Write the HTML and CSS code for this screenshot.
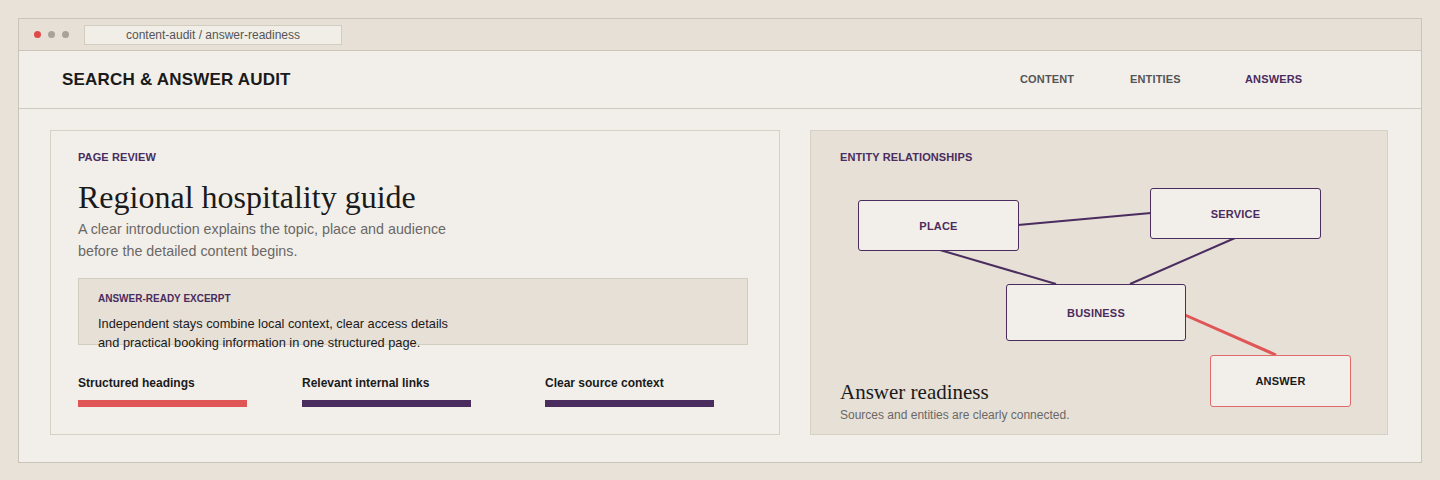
FILE: index.html
```html
<!DOCTYPE html>
<html lang="en">
<head>
<meta charset="utf-8">
<title>Search &amp; Answer Audit</title>
<link rel="stylesheet" href="styles.css">
</head>
<body>
<div class="window">
  <div class="chrome">
    <div class="dots"><span class="dot red"></span><span class="dot"></span><span class="dot"></span></div>
    <div class="url">content-audit / answer-readiness</div>
  </div>
  <header class="topbar">
    <div class="brand">SEARCH &amp; ANSWER AUDIT</div>
    <nav class="nav">
      <a class="nav-item">CONTENT</a>
      <a class="nav-item">ENTITIES</a>
      <a class="nav-item active">ANSWERS</a>
    </nav>
  </header>
  <main class="main">
    <section class="card review">
      <div class="eyebrow">PAGE REVIEW</div>
      <h1 class="title">Regional hospitality guide</h1>
      <p class="intro">A clear introduction explains the topic, place and audience before the detailed content begins.</p>
      <div class="excerpt">
        <div class="excerpt-label">ANSWER-READY EXCERPT</div>
        <p class="excerpt-text">Independent stays combine local context, clear access details and practical booking information in one structured page.</p>
      </div>
      <div class="metrics">
        <div class="metric"><div class="metric-label">Structured headings</div><div class="bar bar-red"></div></div>
        <div class="metric"><div class="metric-label">Relevant internal links</div><div class="bar"></div></div>
        <div class="metric"><div class="metric-label">Clear source context</div><div class="bar"></div></div>
      </div>
    </section>
    <section class="card entities">
      <div class="eyebrow">ENTITY RELATIONSHIPS</div>
      <svg class="links" width="578" height="304" viewBox="0 0 578 304">
        <line x1="207" y1="94" x2="340" y2="82" class="ln"/>
        <line x1="129" y1="119" x2="245" y2="153" class="ln"/>
        <line x1="424" y1="107" x2="319" y2="153" class="ln"/>
        <line x1="374" y1="184" x2="465" y2="224" class="ln red"/>
      </svg>
      <div class="node n-place">PLACE</div>
      <div class="node n-service">SERVICE</div>
      <div class="node n-business">BUSINESS</div>
      <div class="node n-answer">ANSWER</div>
      <div class="readiness">
        <h2 class="readiness-title">Answer readiness</h2>
        <p class="readiness-text">Sources and entities are clearly connected.</p>
      </div>
    </section>
  </main>
</div>
</body>
</html>
```

FILE: styles.css
```css
* { box-sizing: border-box; }
html, body { margin: 0; padding: 0; }
body {
  background: #e8e2d9;
  font-family: "Liberation Sans", Arial, sans-serif;
  color: #1a1a1a;
  padding: 18px;
  height: 480px;
}
.window {
  border: 1px solid #c9c4b8;
  background: #f2efea;
  height: 445px;
  display: flex;
  flex-direction: column;
}
.chrome {
  height: 32px;
  background: #e6e0d7;
  border-bottom: 1px solid #cac5ba;
  display: flex;
  align-items: center;
  padding-left: 15px;
}
.dots { display: flex; gap: 7px; }
.dot { width: 7px; height: 7px; border-radius: 50%; background: #a8a29a; }
.dot.red { background: #e04a4a; }
.url {
  margin-left: 15px;
  width: 258px;
  height: 20px;
  background: #f1eee8;
  border: 1px solid #d3cdbf;
  font-size: 12px;
  line-height: 18px;
  color: #555;
  text-align: center;
  margin-top: 1px;
}
.topbar {
  height: 58px;
  border-bottom: 1px solid #cfcabf;
  display: flex;
  align-items: center;
  justify-content: space-between;
  padding: 0 0 2px 43px;
}
.brand { font-size: 17px; font-weight: 700; letter-spacing: 0.2px; color: #1a1a1a; margin-top: 2px; }
.nav {
  display: grid;
  grid-template-columns: 110px 115px 176px;
  font-size: 11px;
  font-weight: 700;
  letter-spacing: 0.15px;
}
.nav-item { color: #555; }
.nav-item.active { color: #4a2c5e; }
.main {
  flex: 1;
  display: grid;
  grid-template-columns: 730px 578px;
  column-gap: 30px;
  padding: 21px 32px 27px 31px;
}
.card { border: 1px solid #d6d1c5; position: relative; }
.review { background: #f2efea; padding: 19px 31px 0 27px; }
.entities { background: #e6e0d7; padding: 19px 29px 0; }
.eyebrow {
  font-size: 11px; font-weight: 700; color: #4a2c5e; line-height: 14px; letter-spacing: 0.1px;
}
.title {
  font-family: "Liberation Serif", "Times New Roman", serif;
  font-weight: 400;
  font-size: 32px;
  line-height: 38px;
  margin: 14px 0 0;
  color: #1a1a1a;
}
.intro {
  margin: 2px 0 0;
  font-size: 14.3px;
  line-height: 22px;
  color: #6b6866;
  max-width: 400px;
}
.excerpt {
  margin-top: 16px;
  height: 67px;
  background: #e6e0d7;
  border: 1px solid #d3cdbf;
  padding: 14px 19px 0;
}
.excerpt-label { font-size: 10px; font-weight: 700; color: #4a2c5e; line-height: 12px; }
.excerpt-text {
  margin: 9px 0 0;
  font-size: 12.8px;
  line-height: 19px;
  color: #1a1a1a;
  max-width: 365px;
}
.metrics {
  margin-top: 31px;
  display: grid;
  grid-template-columns: 224px 243px 1fr;
}
.metric-label { font-size: 12px; font-weight: 700; line-height: 14px; color: #1a1a1a; }
.bar { margin-top: 10px; width: 169px; height: 7px; background: #4a2c5e; }
.bar-red { background: #e05656; }
.links { position: absolute; left: 0; top: 0; }
.ln { stroke: #4a2c5e; stroke-width: 2; }
.ln.red { stroke: #e05656; stroke-width: 3; }
.node {
  position: absolute;
  background: #f2efea;
  border: 1.5px solid #4a2c5e;
  border-radius: 3px;
  display: flex;
  align-items: center;
  justify-content: center;
  font-size: 11px;
  font-weight: 700;
  color: #4a2c5e;
  letter-spacing: 0.2px;
}
.n-place { left: 47px; top: 69px; width: 161px; height: 51px; }
.n-service { left: 339px; top: 57px; width: 171px; height: 51px; }
.n-business { left: 195px; top: 153px; width: 180px; height: 57px; }
.n-answer { left: 399px; top: 224px; width: 141px; height: 52px; border-color: #e06a6a; color: #1a1a1a; }
.readiness { position: absolute; left: 29px; bottom: 12px; }
.readiness-title {
  font-family: "Liberation Serif", "Times New Roman", serif;
  font-weight: 400;
  font-size: 21px;
  line-height: 24px;
  margin: 0;
  color: #1a1a1a;
}
.readiness-text { margin: 4px 0 0; font-size: 12px; line-height: 14px; color: #6b6866; }
```
